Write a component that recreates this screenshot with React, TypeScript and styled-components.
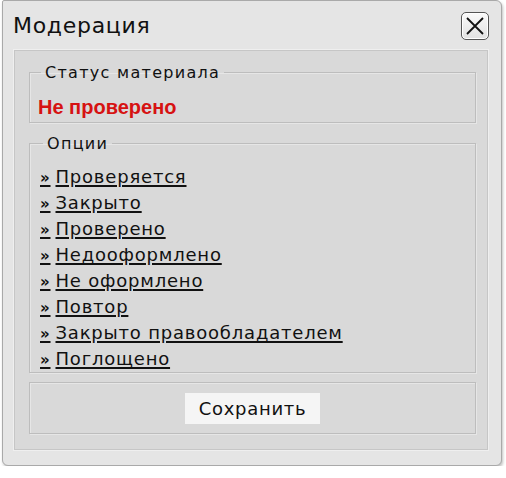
import React from "react";
import styled, { createGlobalStyle } from "styled-components";

const GlobalStyle = createGlobalStyle`
  html, body {
    margin: 0;
    padding: 0;
    background: #ffffff;
    font-family: "DejaVu Sans", Verdana, sans-serif;
  }
`;

const Window = styled.div`
  box-sizing: border-box;
  width: 500px;
  height: 466px;
  margin-left: 2px;
  background: #e5e5e5;
  border: 1px solid #a9a9a9;
  border-radius: 2px 6px 6px 6px;
  box-shadow: 1px 2px 3px rgba(0, 0, 0, 0.25);
  display: flex;
  flex-direction: column;
`;

const TitleBar = styled.div`
  height: 49px;
  flex-shrink: 0;
  display: flex;
  align-items: center;
  justify-content: space-between;
  padding: 0 12px 0 10px;
`;

const Title = styled.h1`
  margin: 0;
  font-size: 22px;
  font-weight: normal;
  color: #111;
  letter-spacing: 0.7px;
`;

const CloseButton = styled.button`
  box-sizing: border-box;
  width: 28px;
  height: 28px;
  padding: 0;
  border: 1px solid #555;
  border-radius: 5px;
  background: linear-gradient(#fafafa, #e2e2e2);
  display: flex;
  align-items: center;
  justify-content: center;
  box-shadow: inset 0 0 0 1px #fff;
`;

const Panel = styled.div`
  box-sizing: border-box;
  height: 400px;
  flex-shrink: 0;
  margin: 0 13px 0 11px;
  padding: 12px 11px 15px 14px;
  background: #d9d9d9;
  border: 1px solid #c6c6c6;
  box-shadow: 0 0 0 1px #efefef;
  display: flex;
  flex-direction: column;
`;

const Group = styled.fieldset<{ $gap?: number }>`
  flex-shrink: 0;
  margin: ${(p) => p.$gap ?? 0}px 0 0 0;
  padding: ${(p) => (p.$gap ? "11px 8px 0 10px" : "13px 8px 3px 8px")};
  border: 1px solid #bdbdbd;
  box-shadow: 1px 1px 0 #e6e6e6, inset 1px 1px 0 #e6e6e6;
  min-width: 0;
`;

const Legend = styled.legend`
  margin-left: 3px;
  padding: 0 4px;
  font-size: 16px;
  color: #111;
  letter-spacing: 1.3px;
`;

const Status = styled.div`
  font-family: "Liberation Sans", Arial, sans-serif;
  font-weight: bold;
  font-size: 20px;
  line-height: 24px;
  color: #d61212;
`;

const OptionList = styled.ul`
  list-style: none;
  margin: 0;
  padding: 0;
`;

const OptionItem = styled.li`
  height: 26px;
  line-height: 26px;
`;

const OptionLink = styled.a`
  font-size: 18px;
  letter-spacing: 0.8px;
  color: #111;
  text-decoration: underline;
  text-decoration-thickness: 2px;
  text-underline-offset: 2px;
  cursor: pointer;
`;

const Arrow = styled.span`
  font-weight: bold;
  font-size: 15px;
  margin-right: 5px;
`;

const Footer = styled.div`
  box-sizing: border-box;
  flex-shrink: 0;
  margin-top: 9px;
  height: 52px;
  border: 1px solid #bdbdbd;
  box-shadow: 1px 1px 0 #e6e6e6, inset 1px 1px 0 #e6e6e6;
  display: flex;
  align-items: center;
  justify-content: center;
`;

const SaveButton = styled.button`
  width: 135px;
  height: 31px;
  border: none;
  background: #f5f5f5;
  font-family: "DejaVu Sans", Verdana, sans-serif;
  font-size: 18px;
  letter-spacing: 0.7px;
  color: #111;
  padding: 0;
`;

const options = [
  "Проверяется",
  "Закрыто",
  "Проверено",
  "Недооформлено",
  "Не оформлено",
  "Повтор",
  "Закрыто правообладателем",
  "Поглощено",
];

export default function App() {
  return (
    <>
      <GlobalStyle />
      <Window>
        <TitleBar>
          <Title>Модерация</Title>
          <CloseButton aria-label="Закрыть">
            <svg width="20" height="20" viewBox="0 0 20 20">
              <path d="M2 2 L18 18 M18 2 L2 18" stroke="#111" strokeWidth="1.8" fill="none" />
            </svg>
          </CloseButton>
        </TitleBar>
        <Panel>
          <Group>
            <Legend>Статус материала</Legend>
            <Status>Не проверено</Status>
          </Group>
          <Group $gap={11}>
            <Legend>Опции</Legend>
            <OptionList>
              {options.map((o) => (
                <OptionItem key={o}>
                  <OptionLink>
                    <Arrow>»</Arrow>
                    {o}
                  </OptionLink>
                </OptionItem>
              ))}
            </OptionList>
          </Group>
          <Footer>
            <SaveButton>Сохранить</SaveButton>
          </Footer>
        </Panel>
      </Window>
    </>
  );
}
